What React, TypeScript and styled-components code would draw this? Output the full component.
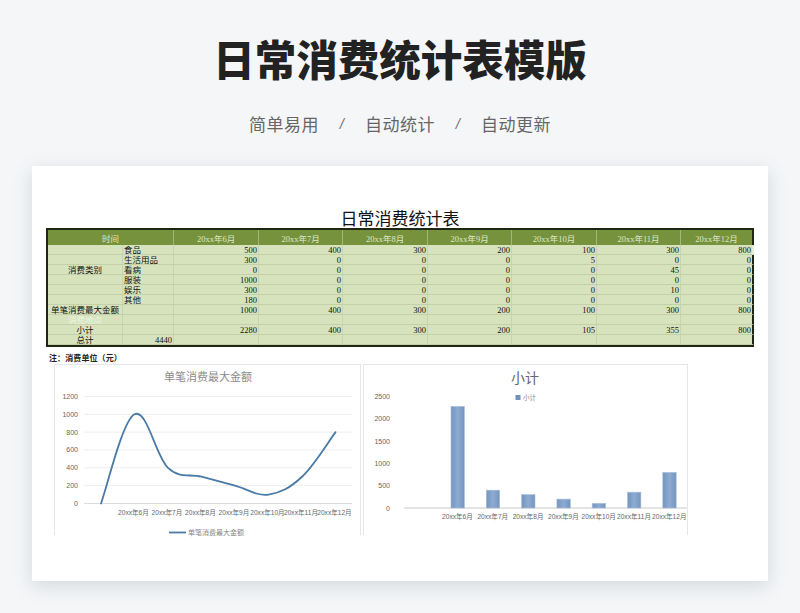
import React from 'react';
import styled, { createGlobalStyle } from 'styled-components';

const Global = createGlobalStyle`
  html, body { margin: 0; padding: 0; background: #f4f6f8; }
  #root { width: 800px; height: 613px; overflow: hidden; }
`;
const Page = styled.div`
  width: 800px; height: 613px; background: #f4f6f8; box-sizing: border-box; padding-top: 32px;
  display: flex; flex-direction: column; align-items: center;
  font-family: "Noto Sans CJK SC", "Noto Sans", sans-serif;
`;
const Heading = styled.h1`
  margin: 0; font-size: 41.5px; line-height: 52px; font-weight: 900; color: #222; letter-spacing: 0;
`;
const Tagline = styled.div`
  margin-top: 27px; height: 26px; display: flex; align-items: center; justify-content: center;
  color: #666; font-size: 17px; letter-spacing: 0.5px; line-height: 26px;
`;
const Slash = styled.span`
  width: 46px; text-align: center; font-size: 15px; color: #777; font-family: "Liberation Sans", sans-serif;
  font-style: italic;
`;
const Card = styled.section`
  margin-top: 29px; width: 736px; height: 415px; background: #fff; box-sizing: border-box;
  padding: 43px 14px 0; box-shadow: 0 5px 18px rgba(90, 100, 115, 0.2); overflow: hidden;
`;
const SheetTitle = styled.div`
  height: 19px; line-height: 21px; text-align: center; font-size: 17px; color: #111;
  font-family: "Liberation Serif", "Noto Sans CJK SC", serif;
`;
const Table = styled.table`
  width: 708px; height: 118px; table-layout: fixed; border-collapse: separate; border-spacing: 0;
  border-top: 2px solid #1f2714; border-bottom: 2px solid #1f2714; border-left: 2px solid #1f2714;
  font-family: "Liberation Serif", "Noto Sans CJK SC", serif; font-size: 8.5px; color: #111;
`;
const Col = styled.col<{ $w: number }>`
  width: ${p => p.$w}px;
`;
const HeadCell = styled.th`
  height: 12px; padding: 3px 1px 0; background: #76923c; color: #dfe8c8; font-weight: 400; font-size: 8.5px;
  line-height: 11px; text-align: center; border-right: 1px solid #a3b77a; white-space: nowrap;
  &:last-child { border-right: 2px solid #1f2714; }
`;
const Cell = styled.td<{ $align?: string; $open?: boolean; $last?: boolean; $pale?: boolean }>`
  height: 7px; padding: 2px 1px 0; line-height: 7px; background: #d7e3bc; white-space: nowrap;
  text-align: ${p => p.$align || 'right'};
  color: ${p => (p.$pale ? '#eef3e0' : '#111')};
  border-bottom: 1px solid #c3d0a9;
  border-right: ${p => (p.$last ? (p.$open ? '2px solid #e4ecd2' : '2px solid #1f2714') : '1px solid #c8d3b2')};
`;
const Note = styled.div`
  margin: 7px 0 0 3px; height: 10px; line-height: 10px; font-size: 8px; letter-spacing: 0.1px; font-weight: 700; color: #222;
  font-family: "Liberation Serif", "Noto Sans CJK SC", serif;
`;
const ChartRow = styled.div`
  display: flex; gap: 2px; margin: 0 0 0 8px;
`;
const ChartBox = styled.div<{ $w: number }>`
  width: ${p => p.$w}px; height: 171px; box-sizing: border-box; flex: none;
  border: 1px solid #e6e6e6; border-bottom: none; background: #fff;
`;
const Plot = styled.svg`
  display: block; width: 100%; height: 100%; overflow: visible;
  font-family: "Liberation Sans", "Noto Sans CJK SC", sans-serif;
`;

const months = ['20xx年6月', '20xx年7月', '20xx年8月', '20xx年9月', '20xx年10月', '20xx年11月', '20xx年12月'];
type Row = { a: string; b: string; v: (number | string)[]; pale?: boolean };
const rows: Row[] = [
  { a: '', b: '食品', v: [500, 400, 300, 200, 100, 300, 800] },
  { a: '', b: '生活用品', v: [300, 0, 0, 0, 5, 0, 0] },
  { a: '消费类别', b: '看病', v: [0, 0, 0, 0, 0, 45, 0] },
  { a: '', b: '服装', v: [1000, 0, 0, 0, 0, 0, 0] },
  { a: '', b: '娱乐', v: [300, 0, 0, 0, 0, 10, 0] },
  { a: '', b: '其他', v: [180, 0, 0, 0, 0, 0, 0] },
  { a: '单笔消费最大金额', b: '', v: [1000, 400, 300, 200, 100, 300, 800] },
  { a: '消费地点', b: '', v: ['', '', '', '', '', '', ''], pale: true },
  { a: '小计', b: '', v: [2280, 400, 300, 200, 105, 355, 800] },
];

const lineVals = [0, 1000, 400, 300, 200, 100, 300, 800];
const lineY = (v: number) => 138.5 - v * 0.0892;
const lineX = (i: number) => 46 + i * 33.5;
const linePath = () => {
  const p = lineVals.map((v, i) => [lineX(i), lineY(v)]);
  let d = `M${p[0][0]} ${p[0][1]}`;
  for (let i = 0; i < p.length - 1; i++) {
    const a = p[Math.max(i - 1, 0)], b = p[i], c = p[i + 1], e = p[Math.min(i + 2, p.length - 1)];
    const k = 5.5;
    d += ` C${b[0] + (c[0] - a[0]) / k} ${b[1] + (c[1] - a[1]) / k} ${c[0] - (e[0] - b[0]) / k} ${c[1] - (e[1] - b[1]) / k} ${c[0]} ${c[1]}`;
  }
  return d;
};
const LineChart = () => (
  <Plot viewBox="0 0 305 170">
    <text x="153" y="16" fontSize="11" fill="#8c8c8c" textAnchor="middle" fontFamily="Liberation Serif, Noto Sans CJK SC, serif">单笔消费最大金额</text>
    {[0, 200, 400, 600, 800, 1000, 1200].map(v => (
      <g key={v}>
        <line x1="29" x2="297" y1={lineY(v)} y2={lineY(v)} stroke={v === 0 ? '#dcdcdc' : '#eeeeee'} strokeWidth="1" />
        <text x="23" y={lineY(v) + 2.5} fontSize="7" fill="#666" textAnchor="end">{v}</text>
      </g>
    ))}
    <path d={linePath()} fill="none" stroke="#4a7aa8" strokeWidth="1.8" strokeLinecap="round" />
    {months.map((m, i) => (
      <text key={m} x={lineX(i + 1) - 1} y="149.5" fontSize="6.6" fill="#666" textAnchor="middle">{m}</text>
    ))}
    <line x1="114" x2="131" y1="167.5" y2="167.5" stroke="#4a7aa8" strokeWidth="1.8" />
    <text x="133" y="170" fontSize="7" fill="#888">单笔消费最大金额</text>
  </Plot>
);

const barVals = [2280, 400, 300, 200, 105, 355, 800];
const barBase = 143;
const BarChart = () => (
  <Plot viewBox="0 0 323 170">
    <defs>
      <linearGradient id="barFill" x1="0" x2="1" y1="0" y2="0">
        <stop offset="0" stopColor="#7395bf" />
        <stop offset="0.5" stopColor="#8eabd0" />
        <stop offset="1" stopColor="#7395bf" />
      </linearGradient>
    </defs>
    <text x="161" y="18" fontSize="14" fill="#666" textAnchor="middle" fontFamily="Liberation Serif, Noto Sans CJK SC, serif">小计</text>
    <rect x="151.5" y="30" width="5" height="5" fill="#6f93bd" />
    <text x="159" y="35" fontSize="6.5" fill="#888">小计</text>
    {[0, 500, 1000, 1500, 2000, 2500].map(v => (
      <text key={v} x="26" y={barBase - v * 0.04456 + 2.5} fontSize="7" fill="#666" textAnchor="end">{v}</text>
    ))}
    <line x1="40" x2="323" y1={barBase} y2={barBase} stroke="#c8c8c8" strokeWidth="1" />
    {barVals.map((v, i) => (
      <rect key={i} x={87 + i * 35.3} y={barBase - v * 0.04456} width="13.4" height={v * 0.04456} fill="url(#barFill)" stroke="#a9c0dc" strokeWidth="0.6" />
    ))}
    {months.map((m, i) => (
      <text key={m} x={93.5 + i * 35.3} y="154" fontSize="6.6" fill="#666" textAnchor="middle">{m}</text>
    ))}
  </Plot>
);

export default function App() {
  return (
    <Page>
      <Global />
      <Heading>日常消费统计表模版</Heading>
      <Tagline>
        <span>简单易用</span><Slash>/</Slash><span>自动统计</span><Slash>/</Slash><span>自动更新</span>
      </Tagline>
      <Card>
        <SheetTitle>日常消费统计表</SheetTitle>
        <Table>
          <colgroup>
            <Col $w={75} /><Col $w={51} />
            {[85, 84, 85, 84, 85, 84, 73].map((w, i) => <Col key={i} $w={w} />)}
          </colgroup>
          <thead>
            <tr>
              <HeadCell colSpan={2}>时间</HeadCell>
              {months.map(m => <HeadCell key={m}>{m}</HeadCell>)}
            </tr>
          </thead>
          <tbody>
            {rows.map((r, i) => (
              <tr key={i}>
                <Cell $align="center" $pale={r.pale}>{r.a}</Cell>
                <Cell $align="left">{r.b}</Cell>
                {r.v.map((v, j) => <Cell key={j} $last={j === 6} $open={i === 0}>{v}</Cell>)}
              </tr>
            ))}
            <tr>
              <Cell $align="center">总计</Cell>
              <Cell>4440</Cell>
              {[0, 1, 2, 3, 4, 5, 6].map(j => <Cell key={j} $last={j === 6} />)}
            </tr>
          </tbody>
        </Table>
        <Note>注：消费单位（元）</Note>
        <ChartRow>
          <ChartBox $w={307}><LineChart /></ChartBox>
          <ChartBox $w={325}><BarChart /></ChartBox>
        </ChartRow>
      </Card>
    </Page>
  );
}
